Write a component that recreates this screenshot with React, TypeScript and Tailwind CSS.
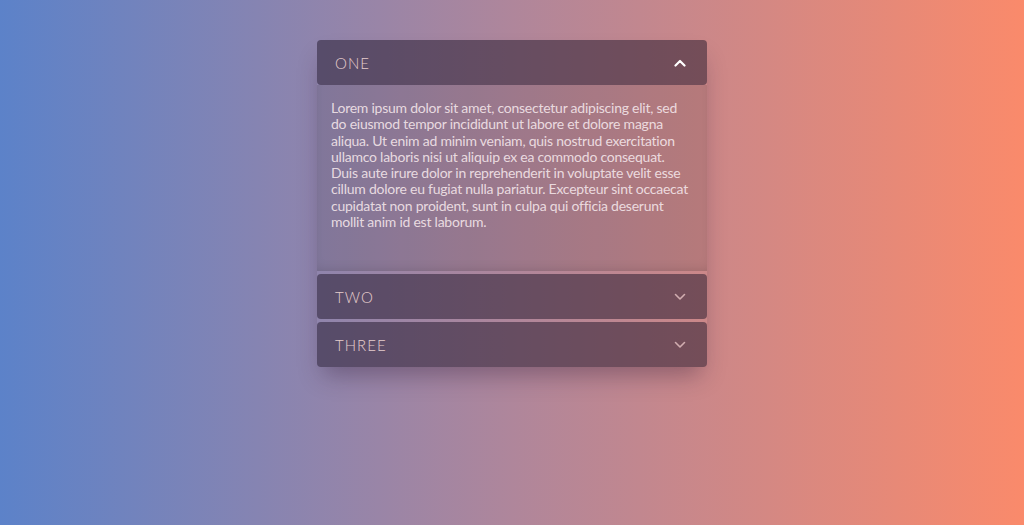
import * as React from 'react'

const loremLines = [
  'Lorem ipsum dolor sit amet, consectetur adipiscing elit, sed',
  'do eiusmod tempor incididunt ut labore et dolore magna',
  'aliqua. Ut enim ad minim veniam, quis nostrud exercitation',
  'ullamco laboris nisi ut aliquip ex ea commodo consequat.',
  'Duis aute irure dolor in reprehenderit in voluptate velit esse',
  'cillum dolore eu fugiat nulla pariatur. Excepteur sint occaecat',
  'cupidatat non proident, sunt in culpa qui officia deserunt',
  'mollit anim id est laborum.',
]

const items = [
  { id: 'one', title: 'One', lines: loremLines },
  { id: 'two', title: 'Two', lines: loremLines },
  { id: 'three', title: 'Three', lines: loremLines },
]

function Chevron({ up }: { up: boolean }) {
  return (
    <svg width="12" height="8" viewBox="0 0 12 8" className={up ? 'text-white' : 'text-[#e9c6c6]/80'}>
      <path
        d={up ? 'M1.5 6.5 L6 2 L10.5 6.5' : 'M1.5 1.5 L6 6 L10.5 1.5'}
        fill="none"
        stroke="currentColor"
        strokeWidth={up ? 2.2 : 1.6}
        strokeLinecap="round"
        strokeLinejoin="round"
      />
    </svg>
  )
}

export default function App() {
  const [open, setOpen] = React.useState<string | null>('one')

  return (
    <div
      className="h-[525px] w-full bg-[linear-gradient(to_right,#5c82c9,#af869b_50%,#fa8a6b)] flex justify-center pt-10"
      style={{ fontFamily: 'Lato, "Noto Sans", sans-serif' }}
    >
      <div className="w-[390px] flex flex-col gap-[3px] self-start shadow-[0_14px_22px_-6px_rgba(40,20,50,0.35)] rounded">
        {items.map((it) => {
          const isOpen = open === it.id
          return (
            <div key={it.id}>
              <button
                onClick={() => setOpen(isOpen ? null : it.id)}
                className="w-full h-[45px] flex items-center justify-between pl-[18px] pr-[21px] pt-px rounded bg-[rgba(30,20,40,0.5)] text-[#e6cccc] text-[15px] font-light uppercase tracking-[0.07em]"
              >
                <span>{it.title}</span>
                <Chevron up={isOpen} />
              </button>
              {isOpen && (
                <div className="h-[186px] bg-black/10 shadow-[inset_0_-6px_14px_-8px_rgba(0,0,0,0.2)] px-[14px] pt-[15px] text-[14px] leading-[16.3px] text-[#f4e6ea]/90 tracking-[-0.017em]">
                  {it.lines.map((l) => (
                    <p key={l} className="whitespace-nowrap">
                      {l}
                    </p>
                  ))}
                </div>
              )}
            </div>
          )
        })}
      </div>
    </div>
  )
}
